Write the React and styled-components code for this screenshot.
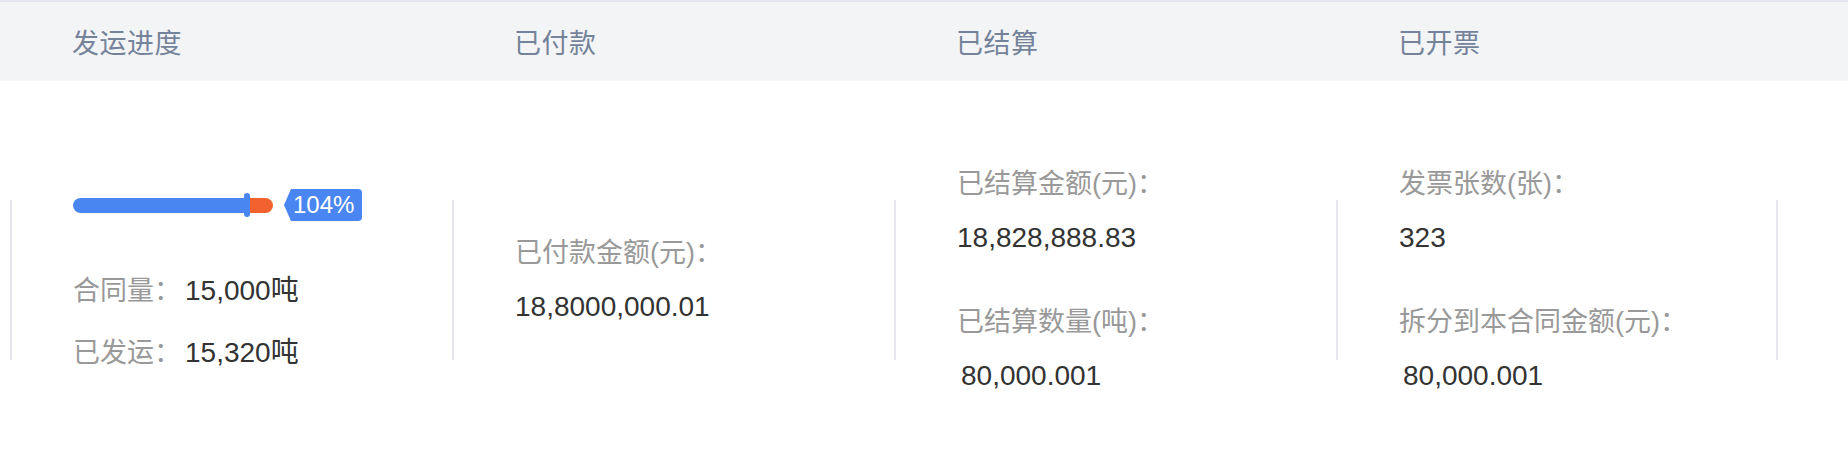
import React from 'react';
import styled, { createGlobalStyle } from 'styled-components';

const GlobalStyle = createGlobalStyle`
  html, body {
    margin: 0;
    padding: 0;
    background: #fff;
    overflow: hidden;
  }
  body {
    font-family: "Liberation Sans", "Noto Sans CJK SC", sans-serif;
  }
`;

const columns = [
  { title: '发运进度' },
  { title: '已付款' },
  { title: '已结算' },
  { title: '已开票' },
];

const App = () => {
  return (
    <>
      <GlobalStyle />
      <Wrapper>
        <HeaderRow>
          {columns.map((c) => (
            <HeaderCell key={c.title}>{c.title}</HeaderCell>
          ))}
        </HeaderRow>
        <BodyRow>
          <Cell>
            <Divider />
            <Content>
              <ProgressLine>
                <Track>
                  <Filled style={{ width: '171px' }} />
                  <Knob />
                  <Over />
                </Track>
                <Badge>104%</Badge>
              </ProgressLine>
              <Stat>
                <Label>合同量：</Label>
                <Value>15,000吨</Value>
              </Stat>
              <Stat gap="26px">
                <Label>已发运：</Label>
                <Value>15,320吨</Value>
              </Stat>
            </Content>
          </Cell>
          <Cell>
            <Divider />
            <Content>
              <Group>
                <Label>已付款金额(元)：</Label>
                <Value>18,8000,000.01</Value>
              </Group>
            </Content>
          </Cell>
          <Cell>
            <Divider />
            <Content>
              <Group>
                <Label>已结算金额(元)：</Label>
                <Value>18,828,888.83</Value>
              </Group>
              <Group next>
                <Label>已结算数量(吨)：</Label>
                <Value indent>80,000.001</Value>
              </Group>
            </Content>
          </Cell>
          <Cell>
            <Divider />
            <Content>
              <Group>
                <Label>发票张数(张)：</Label>
                <Value>323</Value>
              </Group>
              <Group next>
                <Label>拆分到本合同金额(元)：</Label>
                <Value indent>80,000.001</Value>
              </Group>
            </Content>
            <Divider />
          </Cell>
        </BodyRow>
      </Wrapper>
    </>
  );
};

export default App;

const Wrapper = styled.div`
  width: 1848px;
  height: 452px;
  background: #fff;
`;

const HeaderRow = styled.div`
  display: grid;
  grid-template-columns: repeat(4, 442px);
  padding-left: 10px;
  height: 79px;
  border-top: 2px solid #e4e5ee;
  background: #f3f4f6;
  align-items: center;
`;

const HeaderCell = styled.div`
  padding-left: 62px;
  font-size: 27px;
  color: #75839a;
  letter-spacing: 0.5px;
`;

const BodyRow = styled.div`
  display: grid;
  grid-template-columns: repeat(4, 442px);
  padding-left: 10px;
  padding-top: 27px;
  height: 371px;
  box-sizing: border-box;
  align-items: center;
`;

const Cell = styled.div`
  display: flex;
  align-items: center;
`;

const Divider = styled.div`
  flex: none;
  width: 2px;
  height: 160px;
  background: #e6e6ee;
`;

const Content = styled.div`
  flex: 1;
  padding-left: 61px;
  display: flex;
  flex-direction: column;
`;

const ProgressLine = styled.div`
  display: flex;
  align-items: center;
  height: 32px;
  margin-bottom: 52px;
`;

const Track = styled.div`
  display: flex;
  align-items: center;
  width: 200px;
  height: 15px;
`;

const Filled = styled.div`
  height: 15px;
  background: #4a86f2;
  border-radius: 8px 0 0 8px;
`;

const Knob = styled.div`
  width: 6px;
  height: 24px;
  border-radius: 3px;
  background: #4a86f2;
`;

const Over = styled.div`
  flex: 1;
  height: 15px;
  background: #f2622f;
  border-radius: 0 8px 8px 0;
`;

const Badge = styled.div`
  margin-left: 11px;
  height: 32px;
  width: 78px;
  box-sizing: border-box;
  padding-left: 9px;
  display: flex;
  align-items: center;
  background: #4a86f2;
  color: #fff;
  font-size: 24px;
  border-radius: 4px;
  clip-path: polygon(7px 0, 100% 0, 100% 100%, 7px 100%, 0 50%);
`;

const Stat = styled.div`
  display: flex;
  align-items: center;
  column-gap: 4px;
  height: 36px;
  margin-top: ${(p) => p.gap || '0'};
`;

const Group = styled.div`
  display: flex;
  flex-direction: column;
  gap: 18px;
  margin-top: ${(p) => (p.next ? '48px' : '0')};
`;

const Label = styled.div`
  font-size: 27px;
  line-height: 36px;
  color: #999;
  white-space: nowrap;
`;

const Value = styled.div`
  font-size: 28px;
  line-height: 36px;
  color: #333;
  white-space: nowrap;
  padding-left: ${(p) => (p.indent ? '4px' : '0')};
`;
